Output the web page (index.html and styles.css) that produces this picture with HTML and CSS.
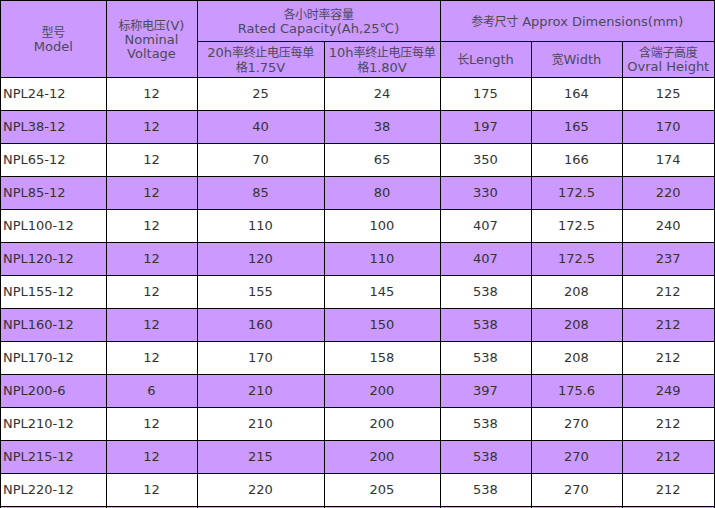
FILE: index.html
```html
<!DOCTYPE html>
<html>
<head>
<meta charset="utf-8">
<link rel="stylesheet" href="styles.css">
</head>
<body>
<div class="wrap">
<table class="spec">
  <colgroup>
    <col class="c1"><col class="c2"><col class="c3"><col class="c4"><col class="c5"><col class="c6"><col class="c7">
  </colgroup>
  <thead>
    <tr class="h1">
      <th rowspan="2"><span class="cn">型号</span><br>Model</th>
      <th rowspan="2"><span class="cn">标称电压</span>(V)<br>Nominal<br>Voltage</th>
      <th colspan="2"><span class="cn">各小时率容量</span><br>Rated Capacity(Ah,25℃)</th>
      <th colspan="3"><span class="cn">参考尺寸</span> Approx Dimensions(mm)</th>
    </tr>
    <tr class="h2">
      <th>20h<span class="cn">率终止电压每单</span><br><span class="cn">格</span>1.75V</th>
      <th>10h<span class="cn">率终止电压每单</span><br><span class="cn">格</span>1.80V</th>
      <th><span class="cn">长</span>Length</th>
      <th><span class="cn">宽</span>Width</th>
      <th><span class="cn">含端子高度</span><br>Ovral Height</th>
    </tr>
  </thead>
  <tbody>
    <tr><td class="name">NPL24-12</td><td>12</td><td>25</td><td>24</td><td>175</td><td>164</td><td>125</td></tr>
    <tr class="alt"><td class="name">NPL38-12</td><td>12</td><td>40</td><td>38</td><td>197</td><td>165</td><td>170</td></tr>
    <tr><td class="name">NPL65-12</td><td>12</td><td>70</td><td>65</td><td>350</td><td>166</td><td>174</td></tr>
    <tr class="alt"><td class="name">NPL85-12</td><td>12</td><td>85</td><td>80</td><td>330</td><td>172.5</td><td>220</td></tr>
    <tr><td class="name">NPL100-12</td><td>12</td><td>110</td><td>100</td><td>407</td><td>172.5</td><td>240</td></tr>
    <tr class="alt"><td class="name">NPL120-12</td><td>12</td><td>120</td><td>110</td><td>407</td><td>172.5</td><td>237</td></tr>
    <tr><td class="name">NPL155-12</td><td>12</td><td>155</td><td>145</td><td>538</td><td>208</td><td>212</td></tr>
    <tr class="alt"><td class="name">NPL160-12</td><td>12</td><td>160</td><td>150</td><td>538</td><td>208</td><td>212</td></tr>
    <tr><td class="name">NPL170-12</td><td>12</td><td>170</td><td>158</td><td>538</td><td>208</td><td>212</td></tr>
    <tr class="alt"><td class="name">NPL200-6</td><td>6</td><td>210</td><td>200</td><td>397</td><td>175.6</td><td>249</td></tr>
    <tr><td class="name">NPL210-12</td><td>12</td><td>210</td><td>200</td><td>538</td><td>270</td><td>212</td></tr>
    <tr class="alt"><td class="name">NPL215-12</td><td>12</td><td>215</td><td>200</td><td>538</td><td>270</td><td>212</td></tr>
    <tr><td class="name">NPL220-12</td><td>12</td><td>220</td><td>205</td><td>538</td><td>270</td><td>212</td></tr>
    <tr class="alt"><td></td><td></td><td></td><td></td><td></td><td></td><td></td></tr>
  </tbody>
</table>
</div>
</body>
</html>
```

FILE: styles.css
```css
html, body {
  margin: 0;
  padding: 0;
  background: #fff;
}
.wrap {
  width: 715px;
  box-sizing: border-box;
  border-top: 1px solid #000;
  border-left: 1px solid #000;
  border-right: 1px solid #000;
}
.spec {
  width: 100%;
  border-collapse: collapse;
  table-layout: fixed;
  font-family: "DejaVu Sans", Verdana, "Noto Sans CJK SC", sans-serif;
  font-size: 13px;
  line-height: 14px;
  color: #333;
}
.cn {
  display: inline-block;
  line-height: 14px;
  font-family: "Noto Sans CJK SC", sans-serif;
  font-size: 12px;
  letter-spacing: -0.3px;
}
.c1 { width: 105px; }
.c2 { width: 91px; }
.c3 { width: 127px; }
.c4 { width: 116px; }
.c5 { width: 91px; }
.c6 { width: 91px; }
.c7 { width: auto; }
.spec th, .spec td {
  border: 1px solid #000;
  padding: 0 1px;
  text-align: center;
  vertical-align: middle;
}
.spec th {
  background: #cc99ff;
  font-weight: normal;
  color: #4a4a5a;
}
.spec tr.h1 th { height: 40px; }
.spec tr.h2 th { height: 35px; }
.spec td { height: 32px; }
.spec td.name { text-align: left; padding-left: 2px; }
.spec tr.alt td { background: #cc99ff; }
.spec tr:first-child th { border-top: none; }
.spec tr th:first-child, .spec tr td:first-child { border-left: none; }
.spec tr th:last-child, .spec tr td:last-child { border-right: none; }
```
